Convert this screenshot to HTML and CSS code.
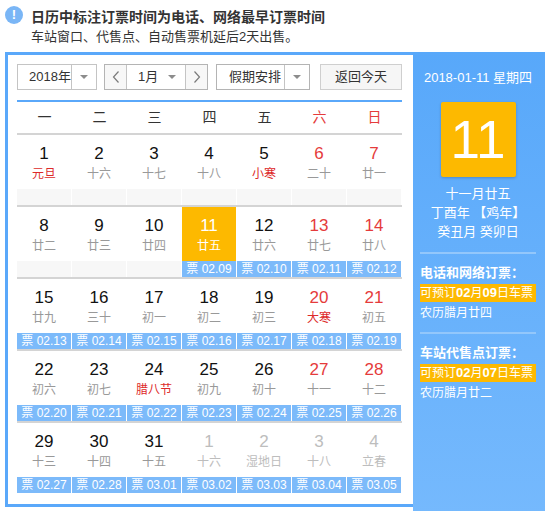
FILE: index.html
```html
<!DOCTYPE html>
<html lang="zh-CN">
<head>
<meta charset="utf-8">
<title>日历</title>
<link rel="stylesheet" href="styles.css">
</head>
<body>
<div class="notice">
  <span class="notice-icon">!</span>
  <div class="notice-text">
    <div class="notice-title">日历中标注订票时间为电话、网络最早订票时间</div>
    <div class="notice-sub">车站窗口、代售点、自动售票机延后2天出售。</div>
  </div>
</div>
<div class="cal">
  <div class="cal-main">
    <div class="toolbar">
      <div class="select year"><span class="select-text">2018年</span><span class="select-arrow"><i class="tri"></i></span></div>
      <div class="month-group">
        <span class="nav prev"><svg width="8" height="14" viewBox="0 0 8 14"><polyline points="6.5,1.5 1.5,7 6.5,12.5" fill="none" stroke="#7a7a7a" stroke-width="1.2"/></svg></span>
        <span class="month-sel"><span>1月</span><i class="tri"></i></span>
        <span class="nav next"><svg width="8" height="14" viewBox="0 0 8 14"><polyline points="1.5,1.5 6.5,7 1.5,12.5" fill="none" stroke="#7a7a7a" stroke-width="1.2"/></svg></span>
      </div>
      <div class="select holiday"><span class="select-text">假期安排</span><span class="select-arrow"><i class="tri"></i></span></div>
      <button class="today-btn">返回今天</button>
    </div>
    <div class="weekdays">
      <span>一</span><span>二</span><span>三</span><span>四</span><span>五</span><span class="red">六</span><span class="red">日</span>
    </div>
    <div class="week">
      <div class="day"><div class="day-top"><div class="num">1</div><div class="lunar fest">元旦</div></div><div class="tk empty"></div></div>
      <div class="day"><div class="day-top"><div class="num">2</div><div class="lunar">十六</div></div><div class="tk empty"></div></div>
      <div class="day"><div class="day-top"><div class="num">3</div><div class="lunar">十七</div></div><div class="tk empty"></div></div>
      <div class="day"><div class="day-top"><div class="num">4</div><div class="lunar">十八</div></div><div class="tk empty"></div></div>
      <div class="day"><div class="day-top"><div class="num">5</div><div class="lunar fest">小寒</div></div><div class="tk empty"></div></div>
      <div class="day wkend"><div class="day-top"><div class="num">6</div><div class="lunar">二十</div></div><div class="tk empty"></div></div>
      <div class="day wkend"><div class="day-top"><div class="num">7</div><div class="lunar">廿一</div></div><div class="tk empty"></div></div>
    </div>
    <div class="week">
      <div class="day"><div class="day-top"><div class="num">8</div><div class="lunar">廿二</div></div><div class="tk empty"></div></div>
      <div class="day"><div class="day-top"><div class="num">9</div><div class="lunar">廿三</div></div><div class="tk empty"></div></div>
      <div class="day"><div class="day-top"><div class="num">10</div><div class="lunar">廿四</div></div><div class="tk empty"></div></div>
      <div class="day today"><div class="day-top"><div class="num">11</div><div class="lunar">廿五</div></div><div class="tk">票 02.09</div></div>
      <div class="day"><div class="day-top"><div class="num">12</div><div class="lunar">廿六</div></div><div class="tk">票 02.10</div></div>
      <div class="day wkend"><div class="day-top"><div class="num">13</div><div class="lunar">廿七</div></div><div class="tk">票 02.11</div></div>
      <div class="day wkend"><div class="day-top"><div class="num">14</div><div class="lunar">廿八</div></div><div class="tk">票 02.12</div></div>
    </div>
    <div class="week">
      <div class="day"><div class="day-top"><div class="num">15</div><div class="lunar">廿九</div></div><div class="tk">票 02.13</div></div>
      <div class="day"><div class="day-top"><div class="num">16</div><div class="lunar">三十</div></div><div class="tk">票 02.14</div></div>
      <div class="day"><div class="day-top"><div class="num">17</div><div class="lunar">初一</div></div><div class="tk">票 02.15</div></div>
      <div class="day"><div class="day-top"><div class="num">18</div><div class="lunar">初二</div></div><div class="tk">票 02.16</div></div>
      <div class="day"><div class="day-top"><div class="num">19</div><div class="lunar">初三</div></div><div class="tk">票 02.17</div></div>
      <div class="day wkend"><div class="day-top"><div class="num">20</div><div class="lunar fest">大寒</div></div><div class="tk">票 02.18</div></div>
      <div class="day wkend"><div class="day-top"><div class="num">21</div><div class="lunar">初五</div></div><div class="tk">票 02.19</div></div>
    </div>
    <div class="week">
      <div class="day"><div class="day-top"><div class="num">22</div><div class="lunar">初六</div></div><div class="tk">票 02.20</div></div>
      <div class="day"><div class="day-top"><div class="num">23</div><div class="lunar">初七</div></div><div class="tk">票 02.21</div></div>
      <div class="day"><div class="day-top"><div class="num">24</div><div class="lunar fest">腊八节</div></div><div class="tk">票 02.22</div></div>
      <div class="day"><div class="day-top"><div class="num">25</div><div class="lunar">初九</div></div><div class="tk">票 02.23</div></div>
      <div class="day"><div class="day-top"><div class="num">26</div><div class="lunar">初十</div></div><div class="tk">票 02.24</div></div>
      <div class="day wkend"><div class="day-top"><div class="num">27</div><div class="lunar">十一</div></div><div class="tk">票 02.25</div></div>
      <div class="day wkend"><div class="day-top"><div class="num">28</div><div class="lunar">十二</div></div><div class="tk">票 02.26</div></div>
    </div>
    <div class="week">
      <div class="day"><div class="day-top"><div class="num">29</div><div class="lunar">十三</div></div><div class="tk">票 02.27</div></div>
      <div class="day"><div class="day-top"><div class="num">30</div><div class="lunar">十四</div></div><div class="tk">票 02.28</div></div>
      <div class="day"><div class="day-top"><div class="num">31</div><div class="lunar">十五</div></div><div class="tk">票 03.01</div></div>
      <div class="day other"><div class="day-top"><div class="num">1</div><div class="lunar">十六</div></div><div class="tk">票 03.02</div></div>
      <div class="day other"><div class="day-top"><div class="num">2</div><div class="lunar">湿地日</div></div><div class="tk">票 03.03</div></div>
      <div class="day other"><div class="day-top"><div class="num">3</div><div class="lunar">十八</div></div><div class="tk">票 03.04</div></div>
      <div class="day other"><div class="day-top"><div class="num">4</div><div class="lunar">立春</div></div><div class="tk">票 03.05</div></div>
    </div>
  </div>
  <aside class="side">
    <div class="side-date">2018-01-11 星期四</div>
    <div class="side-day">11</div>
    <div class="side-lunar">
      <div>十一月廿五</div>
      <div>丁酉年 【鸡年】</div>
      <div>癸丑月 癸卯日</div>
    </div>
    <div class="side-sep"></div>
    <div class="side-title">电话和网络订票：</div>
    <div class="side-hl">可预订<b>02</b>月<b>09</b>日车票</div>
    <div class="side-note">农历腊月廿四</div>
    <div class="side-sep"></div>
    <div class="side-title">车站代售点订票：</div>
    <div class="side-hl">可预订<b>02</b>月<b>07</b>日车票</div>
    <div class="side-note">农历腊月廿二</div>
  </aside>
</div>
</body>
</html>
```
FILE: styles.css
```css
html, body {
  margin: 0;
  padding: 0;
}
body {
  width: 545px;
  height: 511px;
  overflow: hidden;
  background: #fff;
  font-family: "Liberation Sans", "Noto Sans CJK SC", sans-serif;
  color: #333;
}
.notice {
  height: 52px;
  box-sizing: border-box;
  padding: 6px 0 0 5px;
  display: flex;
  align-items: flex-start;
}
.notice-icon {
  width: 18px;
  height: 18px;
  border-radius: 50%;
  background: #7ab6f6;
  color: #fff;
  font-weight: bold;
  font-size: 13px;
  line-height: 18px;
  text-align: center;
  flex: none;
}
.notice-text {
  margin-left: 8px;
  margin-top: 1px;
}
.notice-title {
  font-size: 14px;
  font-weight: bold;
  line-height: 20px;
  color: #333;
}
.notice-sub {
  font-size: 13px;
  line-height: 20px;
  color: #333;
}
.cal {
  margin-left: 5px;
  width: 540px;
  box-sizing: border-box;
  border: 3px solid #5aa8fa;
  border-right: none;
  display: flex;
}
.cal-main {
  width: 385px;
  padding: 9px 11px 11px 9px;
}
.toolbar {
  display: flex;
  height: 26px;
}
.select {
  display: flex;
  box-sizing: border-box;
  height: 26px;
  border: 1px solid #c4c4c4;
  background: #fff;
  font-size: 13px;
  line-height: 24px;
  color: #333;
}
.select.year { width: 80px; }
.select.holiday { width: 94px; margin-left: 8px; border-color: #b4b4b4; }
.select-text {
  flex: 1;
  padding-left: 11px;
}
.holiday .select-text { padding-left: 12px; }
.select-arrow {
  width: 24px;
  border-left: 1px solid #c4c4c4;
  display: flex;
  align-items: center;
  justify-content: center;
}
.tri {
  display: block;
  width: 0;
  height: 0;
  border-left: 4px solid transparent;
  border-right: 4px solid transparent;
  border-top: 4px solid #8c8c8c;
}
.month-group {
  margin-left: 7px;
  width: 104px;
  box-sizing: border-box;
  height: 26px;
  border: 1px solid #b4b4b4;
  display: flex;
  font-size: 13px;
  line-height: 24px;
  color: #333;
}
.nav {
  width: 21px;
  display: flex;
  align-items: center;
  justify-content: center;
  background: #f7f7f7;
}
.nav.prev { border-right: 1px solid #c4c4c4; }
.nav.next { border-left: 1px solid #c4c4c4; }
.month-sel {
  flex: 1;
  display: flex;
  align-items: center;
  justify-content: space-between;
  padding: 0 9px 0 11px;
}
.today-btn {
  margin-left: 10px;
  width: 82px;
  height: 26px;
  box-sizing: border-box;
  border: 1px solid #cfcfcf;
  background: #f6f6f6;
  font-family: inherit;
  font-size: 13px;
  color: #333;
  padding: 0;
  line-height: 24px;
}
.weekdays {
  margin-top: 10px;
  border-top: 2px solid #5aa8fa;
  border-bottom: 2px solid #d4d4d4;
  display: grid;
  grid-template-columns: repeat(7, 55px);
  height: 31px;
  line-height: 31px;
  font-size: 14px;
  text-align: center;
  color: #333;
}
.weekdays .red { color: #e53b3b; }
.week {
  display: grid;
  grid-template-columns: repeat(7, 54px);
  column-gap: 1px;
  border-bottom: 2px solid #d4d4d4;
}
.week:last-child { border-bottom: none; }
.day {
  display: flex;
  flex-direction: column;
}
.day-top {
  height: 54px;
  box-sizing: border-box;
  padding-top: 9px;
  text-align: center;
}
.num {
  font-size: 17px;
  line-height: 20px;
  color: #111;
}
.lunar {
  font-size: 12px;
  line-height: 20px;
  color: #999;
}
.lunar.fest { color: #dd2a2a; }
.wkend .num { color: #e53b3b; }
.other .num, .other .lunar { color: #bdbdbd; }
.today .day-top { background: #fdb900; }
.today .num, .today .lunar { color: #fff; }
.tk {
  height: 16px;
  line-height: 16px;
  background: #7cbafa;
  color: #fff;
  font-size: 12px;
  text-align: center;
  white-space: nowrap;
}
.tk.empty { background: #f7f7f7; }
.side {
  width: 132px;
  flex: none;
  box-sizing: border-box;
  margin-top: -3px;
  margin-bottom: -10px;
  padding: 16px 9px 0 7px;
  background: linear-gradient(#58a8fa, #75b9fd);
  color: #fff;
}
.side-date {
  font-size: 13px;
  line-height: 20px;
  text-align: center;
}
.side-day {
  width: 75px;
  height: 75px;
  margin: 14px auto 0;
  background: #fdb900;
  border-radius: 2px;
  box-shadow: 0 1px 3px rgba(0, 0, 0, 0.2);
  font-size: 53px;
  line-height: 75px;
  text-align: center;
  color: #fff;
}
.side-lunar {
  margin-top: 7px;
  font-size: 13px;
  line-height: 19px;
  text-align: center;
}
.side-sep {
  margin-top: 11px;
  height: 2px;
  background: #93c7fb;
}
.side-lunar + .side-sep { margin-top: 11px; }
.side-note + .side-sep { margin-top: 8px; }
.side-title {
  margin-top: 9px;
  font-size: 13px;
  font-weight: bold;
  line-height: 20px;
}
.side-hl {
  margin-top: 1px;
  height: 18px;
  line-height: 18px;
  background: #fdb900;
  font-size: 12px;
  white-space: nowrap;
}
.side-hl b { font-size: 13px; }
.side-note {
  font-size: 12px;
  line-height: 22px;
}
```
